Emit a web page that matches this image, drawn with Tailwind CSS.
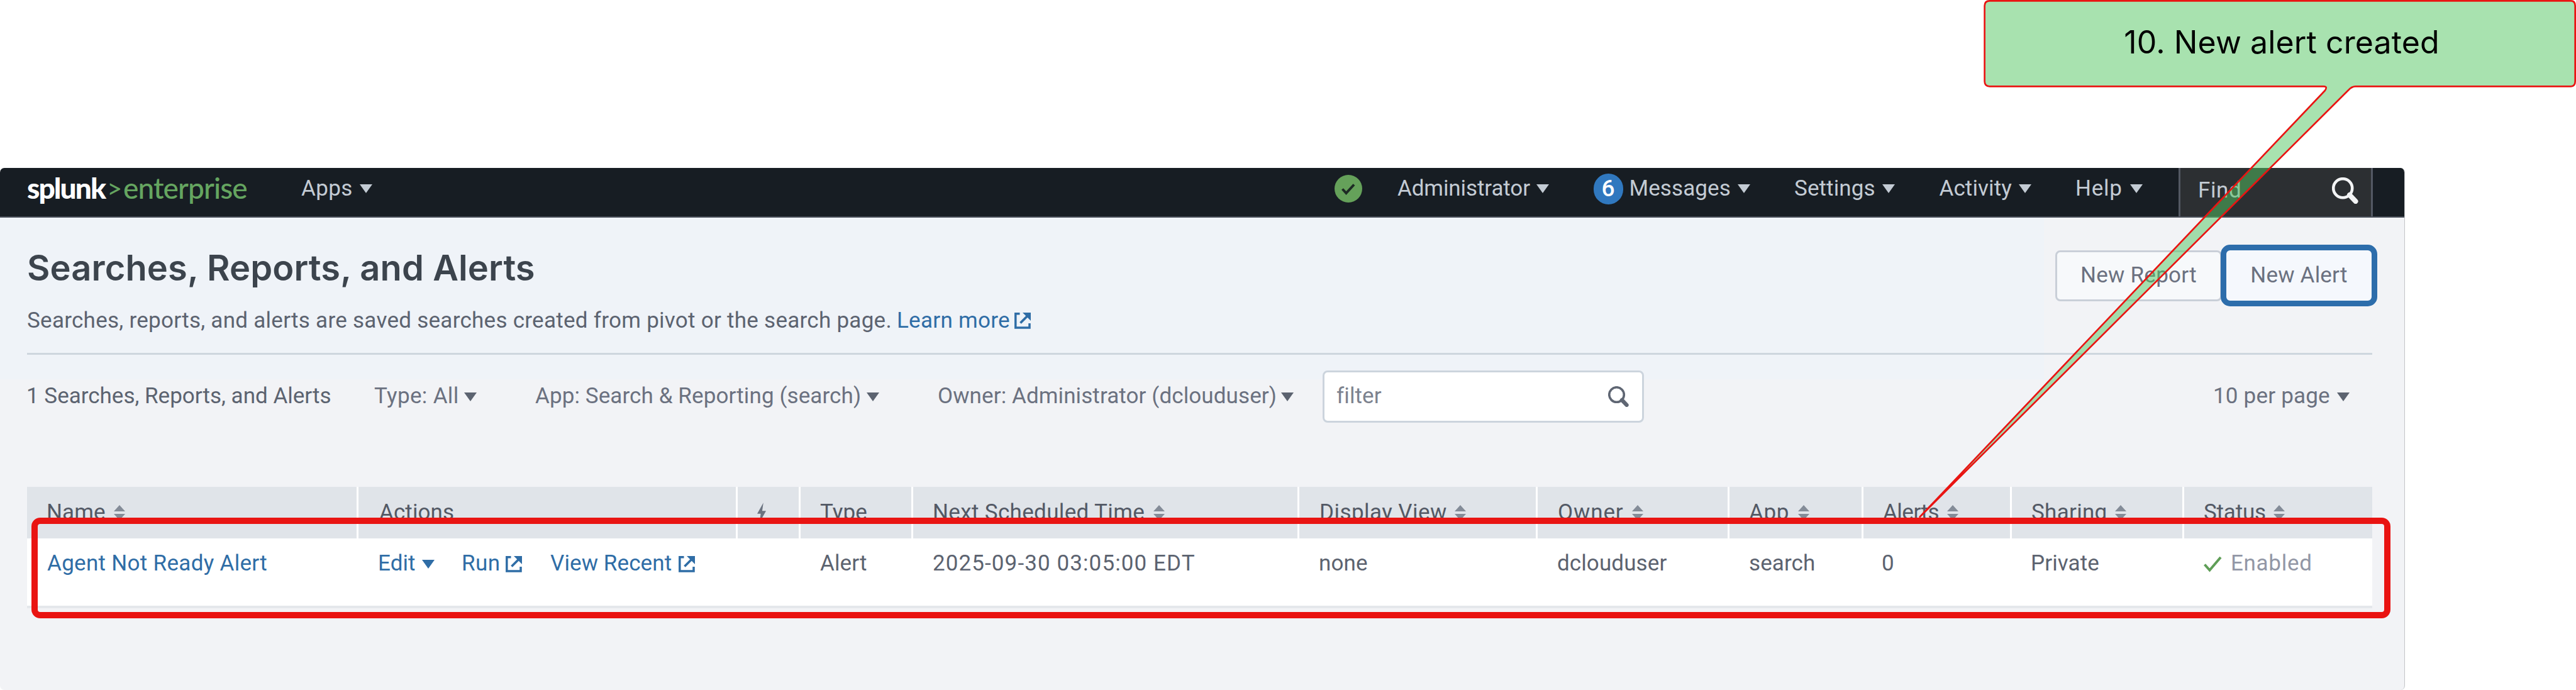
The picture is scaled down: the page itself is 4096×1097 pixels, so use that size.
<!DOCTYPE html>
<html lang="en">
<head>
<meta charset="utf-8">
<title>Searches, Reports, and Alerts</title>
<script src="https://cdn.jsdelivr.net/npm/@tailwindcss/browser@4"></script>
</head>
<body class="relative h-[1097px] w-[4096px] overflow-hidden bg-white font-['Roboto',sans-serif] text-[35px] tracking-[0.1px] text-[#5c6370]">

<!-- shared icons -->
<svg class="absolute h-0 w-0" aria-hidden="true">
  <symbol id="caret" viewBox="0 0 20 14"><path d="M0 0H20L10 14Z" fill="currentColor"/></symbol>
  <symbol id="sort" viewBox="0 0 18 24"><path d="M9 0L18 10H0ZM9 24L18 14H0Z" fill="currentColor"/></symbol>
  <symbol id="ext" viewBox="0 0 26 26"><path d="M8.5 1.8H1.8V24H24V17" fill="none" stroke="currentColor" stroke-width="3.5"/><path d="M9.5 16.5L20 6" fill="none" stroke="currentColor" stroke-width="3.8"/><path d="M13 0H26V13Z" fill="currentColor"/></symbol>
  <symbol id="search" viewBox="0 0 42 42"><circle cx="17.2" cy="17.2" r="15" fill="none" stroke="currentColor" stroke-width="4.6"/><path d="M28 28L37.5 38" stroke="currentColor" stroke-width="8" stroke-linecap="round"/></symbol>
</svg>

<main class="mt-[267px] h-[830px] w-[3824px] overflow-hidden rounded-[7px] border-r border-[#c3c5c8] bg-[#f2f3f6]">

  <header class="flex h-[79px] items-start border-b-2 border-[#4a505a] bg-[#171d23] text-[#c3cbd4]">
    <div class="flex h-[63px] w-[435px] items-center pl-[43px] font-['Lato',sans-serif] text-[46px] leading-none">
      <span class="w-[126px] whitespace-nowrap font-black tracking-[-1.9px] text-white">splunk</span>
      <span class="w-[27px] pl-[1px] text-[42px] text-[#65a560]">&gt;</span>
      <span class="font-medium tracking-[-0.9px] text-[#65a560]">enterprise</span>
    </div>
    <div class="flex h-[66px] items-center pl-[44px]"><span class="w-[93px] tracking-[0.4px]">Apps</span><svg class="h-[14px] w-[20px]"><use href="#caret"/></svg></div>

    <nav class="ml-auto flex h-[66px] items-center gap-[70.5px]">
      <div class="-mr-[14px] flex items-center">
        <svg class="h-[44px] w-[44px]" viewBox="0 0 44 44"><circle cx="22" cy="22" r="22" fill="#65a15a"/><path d="M12.5 22.5L18.5 29L31 15.5" fill="none" stroke="#1d2a24" stroke-width="4"/></svg>
      </div>
      <div class="flex items-center"><span class="w-[221px] tracking-[-0.1px]">Administrator</span><svg class="h-[14px] w-[20px]"><use href="#caret"/></svg></div>
      <div class="flex items-center"><span class="mr-[10px] flex h-[49px] w-[47px] items-center justify-center rounded-full bg-[#3078bf] text-[37px] font-medium text-white">6</span><span class="w-[172px]">Messages</span><svg class="h-[14px] w-[20px]"><use href="#caret"/></svg></div>
      <div class="flex items-center"><span class="w-[140px]">Settings</span><svg class="h-[14px] w-[20px]"><use href="#caret"/></svg></div>
      <div class="flex items-center"><span class="w-[126px]">Activity</span><svg class="h-[14px] w-[20px]"><use href="#caret"/></svg></div>
      <div class="flex items-center"><span class="w-[87px] tracking-[0.7px]">Help</span><svg class="h-[14px] w-[20px]"><use href="#caret"/></svg></div>
    </nav>
    <div class="ml-[57px] mr-[50px] flex h-[77px] w-[309px] items-start justify-between border-x-3 border-[#535863] bg-[#2c2f32] pl-[28px] pr-[20px]">
      <span class="pt-[4px] leading-[64px] tracking-[0.6px]">Find</span>
      <svg class="mt-[15px] h-[42px] w-[42px] text-[#f3f4f5]"><use href="#search"/></svg>
    </div>
  </header>

  <section class="h-[257px] bg-[linear-gradient(to_right,#eff3f8_85%,#f2f3f6_85%)] pl-[43px] pr-[51px]">
    <div class="flex h-[218px] justify-between border-b-3 border-[#ced6de]">
      <div class="pt-[40px]">
        <h1 class="font-['Inter',sans-serif] text-[56px] font-semibold leading-[80px] tracking-[0.12px] text-[#3c444d]">Searches, Reports, and Alerts</h1>
        <p class="mt-[16px] flex items-center leading-[56px] tracking-[0.27px]"><span class="w-[1383px]">Searches, reports, and alerts are saved searches created from pivot or the search page.</span><span class="w-[187px] text-[#2f6da6]">Learn more</span><svg class="h-[26px] w-[26px] text-[#2f6da6]"><use href="#ext"/></svg></p>
      </div>
      <div class="-mr-[8px] mt-[43px] flex h-[98px] items-center">
        <button class="-mr-[2px] h-[81px] w-[265px] rounded-[8px] border-3 border-[#c9cfd8] bg-[#f7f9fb] text-[#6b7180] tracking-[0.25px]">New Report</button>
        <button class="h-[98px] w-[249px] rounded-[15px] border-[9px] border-[#2d6dab] bg-[#f5f8fd] text-[#6b7180] tracking-[0.2px]">New Alert</button>
      </div>
    </div>
  </section>

  <section class="pl-[43px] pr-[51px]">
    <div class="-mt-[14px] flex h-[83px] items-center">
      <span class="w-[552px] -ml-[1px] mr-[1px] tracking-[0px]">1 Searches, Reports, and Alerts</span>
      <div class="flex w-[256px] items-center text-[#6b7180]"><span class="w-[143px] tracking-[0.35px]">Type: All</span><svg class="h-[14px] w-[20px] text-[#5c6370]"><use href="#caret"/></svg></div>
      <div class="flex w-[639px] items-center text-[#6b7180]"><span class="w-[527px]">App: Search &amp; Reporting (search)</span><svg class="h-[14px] w-[20px] text-[#5c6370]"><use href="#caret"/></svg></div>
      <div class="flex w-[613px] items-center text-[#6b7180]"><span class="w-[547px] pl-[1px] tracking-[0.1px]">Owner: Administrator (dclouduser)</span><svg class="h-[14px] w-[20px] text-[#5c6370]"><use href="#caret"/></svg></div>
      <div class="flex h-[83px] w-[511px] items-center justify-between rounded-[8px] border-3 border-[#ccd4dd] bg-white pl-[19px] pr-[21px] text-[#7c828e]"><span>filter</span><svg class="h-[33px] w-[33px] text-[#5f6673]"><use href="#search"/></svg></div>
      <div class="ml-auto mr-[36px] flex items-center text-[#6b7180]"><span class="w-[197px] tracking-[0.2px]">10 per page</span><svg class="h-[14px] w-[20px] text-[#5c6370]"><use href="#caret"/></svg></div>
    </div>

    <div class="mt-[102px] w-[3729px]">
      <div class="grid h-[82px] grid-cols-[527px_603px_100px_179px_614px_379px_305px_213px_236px_274px_299px] bg-[#e0e4e9] text-[#535965] [&>div]:flex [&>div]:items-center [&>div]:whitespace-nowrap [&>div]:border-white [&>div]:pl-[31px] [&_svg]:h-[24px] [&_svg]:w-[18px] [&_svg]:text-[#848c98]">
        <div class="border-r-3"><span class="w-[107px]">Name</span><svg><use href="#sort"/></svg></div>
        <div class="border-r-3"><span class="pl-[2px]">Actions</span></div>
        <div class="border-r-3"><svg viewBox="0 0 15 34" class="!h-[34px] !w-[14px]"><path d="M10.5 0L0 19H6L4 34L15 14H8.5Z" fill="#6b7380"/></svg></div>
        <div class="border-r-3"><span>Type</span></div>
        <div class="border-r-3"><span class="w-[351px] tracking-[0.35px]">Next Scheduled Time</span><svg><use href="#sort"/></svg></div>
        <div class="border-r-3"><span class="w-[216px] pl-[1px] tracking-[0.45px]">Display View</span><svg><use href="#sort"/></svg></div>
        <div class="border-r-3"><span class="w-[119px] pl-[1px] tracking-[0.9px]">Owner</span><svg><use href="#sort"/></svg></div>
        <div class="border-r-3"><span class="w-[78px] tracking-[0.6px]">App</span><svg><use href="#sort"/></svg></div>
        <div class="border-r-3"><span class="w-[102px] tracking-[-0.5px]">Alerts</span><svg><use href="#sort"/></svg></div>
        <div class="border-r-3"><span class="w-[133px] tracking-[0.3px]">Sharing</span><svg><use href="#sort"/></svg></div>
        <div><span class="w-[111px] tracking-[-0.2px]">Status</span><svg><use href="#sort"/></svg></div>
      </div>
      <div class="grid h-[111px] grid-cols-[527px_603px_100px_179px_614px_379px_305px_213px_236px_274px_299px] border-b-4 border-[#e4e7eb] bg-white [&>div]:flex [&>div]:h-[81px] [&>div]:items-center [&>div]:whitespace-nowrap [&>div]:pl-[31px]">
        <div class="text-[#2f6da6]"><span class="pl-px tracking-[0.3px]">Agent Not Ready Alert</span></div>
        <div class="text-[#2f6da6]"><span class="w-[70px]">Edit</span><svg class="mr-[43px] h-[14px] w-[20px]"><use href="#caret"/></svg><span class="w-[70px] tracking-[0.4px]">Run</span><svg class="mr-[45px] h-[26px] w-[26px]"><use href="#ext"/></svg><span class="w-[204px]">View Recent</span><svg class="h-[26px] w-[26px]"><use href="#ext"/></svg></div>
        <div></div>
        <div>Alert</div>
        <div><span class="tracking-[1.1px]">2025-09-30 03:05:00 EDT</span></div>
        <div>none</div>
        <div>dclouduser</div>
        <div>search</div>
        <div class="-ml-[2px]">0</div>
        <div class="-ml-[1px]">Private</div>
        <div class="text-[#9297a6]"><svg class="mr-[14px] h-[26px] w-[29px]" viewBox="0 0 29 26"><path d="M1.5 13.5L9.5 22.5L27 2" fill="none" stroke="#5f9e57" stroke-width="4"/></svg><span class="tracking-[0.7px]">Enabled</span></div>
      </div>
    </div>
  </section>
</main>

<!-- highlight round the new alert's row -->
<div class="absolute left-[50px] top-[823px] h-[159.5px] w-[3751px] rounded-[14px] border-[10px] border-[#e91412]"></div>

<!-- callout bubble with its pointer -->
<svg class="absolute left-0 top-0 h-[1097px] w-[4096px]" viewBox="0 0 6146 1646"><path d="M4747 2H6134Q6144 2 6144 14V194Q6144 206 6134 206H5620Q5611 206 5603 215L4580.5 1233L5547 216Q5554 206 5544 206H4747Q4735 206 4735 194V14Q4735 2 4747 2Z" fill="#51c55f" fill-opacity="0.5" stroke="#e91412" stroke-width="4" stroke-linejoin="round"/></svg>
<div class="absolute left-[3157px] top-0 flex h-[134px] w-[942px] items-center justify-center font-['Inter',sans-serif] text-[50px] tracking-[0.1px] text-black"><span>10. New alert created</span></div>
</body>
</html>
